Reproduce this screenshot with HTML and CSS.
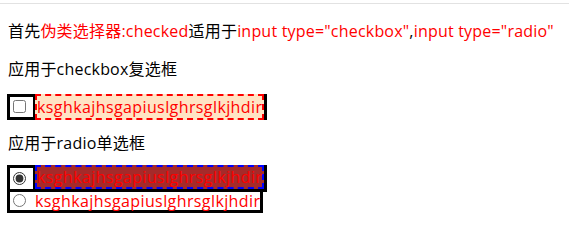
FILE: index.html
```html
<!DOCTYPE html>
<html lang="zh-CN">
<head>
    <meta charset="UTF-8">
    <title>:checked</title>
    <link rel="stylesheet" href="styles.css">
</head>
<body>
    <div class="top-line"></div>
    <p class="first">首先<span class="red">伪类选择器:checked</span>适用于<span class="red">input type="checkbox"</span>,<span class="red">input type="radio"</span></p>

    <p>应用于checkbox复选框</p>
    <div class="group group-check">
        <label class="item">
            <input type="checkbox">
            <span>ksghkajhsgapiuslghrsglkjhdir</span>
        </label>
    </div>

    <p class="third">应用于radio单选框</p>
    <div class="group group-radio">
        <label class="item">
            <input type="radio" name="r" checked>
            <span>ksghkajhsgapiuslghrsglkjhdir</span>
        </label>
        <label class="item">
            <input type="radio" name="r">
            <span>ksghkajhsgapiuslghrsglkjhdir</span>
        </label>
    </div>
</body>
</html>
```

FILE: styles.css
```css
* {
    box-sizing: border-box;
}

body {
    margin: 0;
    padding: 0 8px;
    font-family: "Open Sans", "Noto Sans CJK SC", sans-serif;
    font-size: 16px;
    line-height: 22px;
    letter-spacing: 0.2px;
    color: #000;
    background: #fff;
}

.top-line {
    height: 4px;
    border-bottom: 1px solid #e2e2e2;
    margin: 0 -8px;
}

p {
    margin: 16px 0 0;
    white-space: nowrap;
}

p.third {
    margin-top: 12px;
}

.red {
    color: #ff0000;
}

/* label groups */
.group {
    display: flex;
    flex-direction: column;
    align-items: flex-start;
    margin-left: -1px;
}

.group-check {
    margin-top: 14px;
}

.group-radio {
    margin-top: 11px;
}

.item {
    display: flex;
    align-items: flex-start;
    height: 24px;
    border: 3px solid #000;
    color: #ff0000;
    accent-color: #333;
}

.item + .item {
    margin-top: -3px;
}

.item input {
    margin: 2px 7px 0 3px;
    width: 13px;
    height: 13px;
    flex-shrink: 0;
}

.item span {
    margin-left: 2px;
    line-height: 18px;
    letter-spacing: 0.4px;
}

/* checkbox + span */
.group-check .item {
    height: 26px;
}

.group-check .item input {
    margin-top: 3px;
}

input[type="checkbox"] + span {
    margin-top: -3px;
    height: 26px;
    line-height: 22px;
    border: 2px dashed #ff0000;
    background: bisque;
    box-shadow: -2px 0 0 #000;
}

/* radio:checked + span */
.group-radio .item:first-child {
    height: 27px;
}

.group-radio .item:first-child input {
    margin-top: 4px;
}

input[type="radio"]:checked + span {
    margin-top: -3px;
    height: 24px;
    line-height: 20px;
    border: 2px dashed #0000ff;
    background: #a52a2a;
    box-shadow: -2px 0 0 #000;
}
```
